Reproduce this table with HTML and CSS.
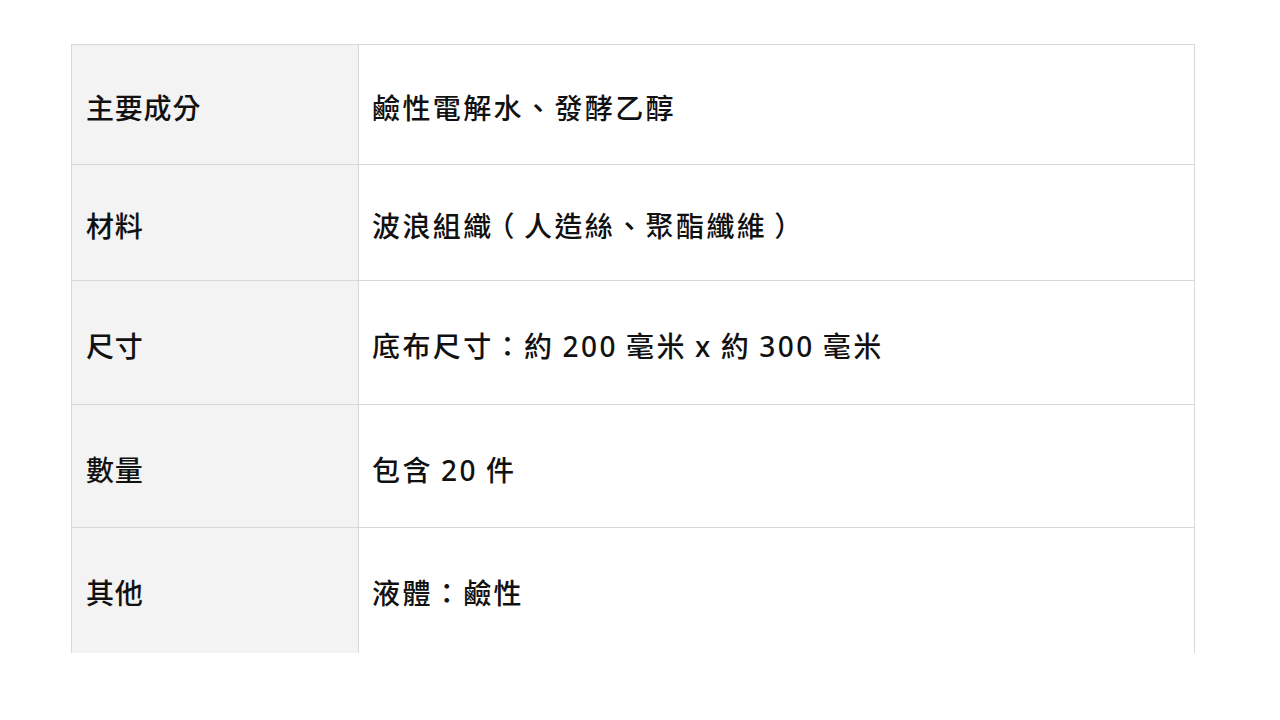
FILE: index.html
```
<!DOCTYPE html>
<html lang="zh-Hant">
<head>
<meta charset="utf-8">
<link rel="stylesheet" href="styles.css">
</head>
<body>
<div class="frame">
<table class="spec">
<tr class="r1"><th>主要成分</th><td>鹼性電解水、發酵乙醇</td></tr>
<tr class="r2"><th>材料</th><td>波浪組織<span class="paren">（</span>人造絲、聚酯纖維<span class="paren">）</span></td></tr>
<tr class="r3"><th>尺寸</th><td>底布尺寸：約 200 毫米 x 約 300 毫米</td></tr>
<tr class="r4"><th>數量</th><td>包含 20 件</td></tr>
<tr class="r5"><th>其他</th><td>液體：鹼性</td></tr>
</table>
</div>
</body>
</html>
```
FILE: styles.css
```
html, body { margin: 0; padding: 0; background: #fff; }
body { font-family: "Noto Sans", "Noto Sans CJK TC", sans-serif; color: #111; }
.frame { margin: 44px 0 0 71px; width: 1124px; height: 609px; overflow: hidden; }
.spec { border-collapse: collapse; width: 1124px; table-layout: fixed; }
.spec th, .spec td { border: 1px solid #d8d8d8; font-size: 28px; font-weight: 500; text-align: left; padding: 9px 13px 0 14px; vertical-align: middle; line-height: 1.4; text-spacing-trim: space-all; }
.spec th { width: 259px; background: #f3f3f3; letter-spacing: 0.8px; padding-left: 14px; }
.spec td { background: #fff; letter-spacing: 2.4px; word-spacing: -1.5px; padding-left: 13px; }
.paren { font-feature-settings: "halt" 1; margin: 0 7px; }
.r1 { height: 120px; }
.r2 { height: 116px; }
.r3 { height: 124px; }
.r4 { height: 123px; }
.r5 { height: 140px; }
.r5 th, .r5 td { padding-bottom: 17px; }
```
